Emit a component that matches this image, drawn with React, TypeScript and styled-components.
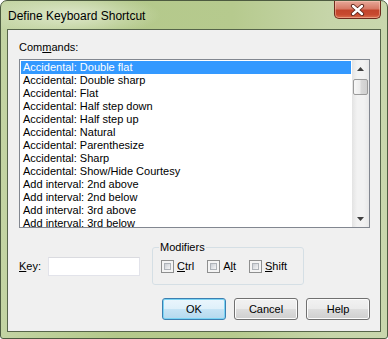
import React from 'react';
import styled, { createGlobalStyle } from 'styled-components';

const GlobalStyle = createGlobalStyle`
  html, body {
    margin: 0;
    padding: 0;
    background: #ffffff;
  }
  body {
    font-family: "Liberation Sans", Arial, sans-serif;
    font-size: 11px;
    color: #000;
  }
`;

const commands = [
  'Accidental: Double flat',
  'Accidental: Double sharp',
  'Accidental: Flat',
  'Accidental: Half step down',
  'Accidental: Half step up',
  'Accidental: Natural',
  'Accidental: Parenthesize',
  'Accidental: Sharp',
  'Accidental: Show/Hide Courtesy',
  'Add interval: 2nd above',
  'Add interval: 2nd below',
  'Add interval: 3rd above',
  'Add interval: 3rd below',
];

const Window = styled.div`
  width: 388px;
  height: 339px;
  box-sizing: border-box;
  border: 1px solid #4d5b40;
  border-radius: 7px 7px 3px 3px;
  background:
    radial-gradient(ellipse 90px 22px at 70px 14px, rgba(228, 236, 212, 0.85), rgba(228, 236, 212, 0) 100%),
    linear-gradient(to right, #c3d4a3 0%, #b4c98b 30%, #b6ca8e 60%, #c6d5a9 85%, #c9d7ad 100%);
  display: flex;
  flex-direction: column;
  padding: 0 6px 6px;
  overflow: hidden;
`;

const TitleBar = styled.div`
  height: 28px;
  display: flex;
  align-items: center;
  padding-left: 1px;
`;

const Title = styled.span`
  font-size: 12px;
  color: #000;
  padding-top: 1px;
`;

const CloseButton = styled.div`
  margin-left: auto;
  align-self: flex-start;
  width: 47px;
  height: 18px;
  box-sizing: border-box;
  border: 1px solid #6e2a1c;
  border-top: none;
  border-radius: 0 0 5px 5px;
  background: linear-gradient(to bottom, #e7a899 0%, #d77a66 45%, #c2442b 55%, #c84a2f 80%, #d9704f 100%);
  box-shadow: inset 0 0 0 1px rgba(255, 210, 190, 0.45);
  display: flex;
  align-items: center;
  justify-content: center;
`;

const Client = styled.div`
  flex: 1;
  box-sizing: border-box;
  border: 1px solid #56654a;
  background: #f0f0f0;
  display: flex;
  flex-direction: column;
  padding: 11px 10px 10px 11px;
`;

const Label = styled.label`
  display: block;
  line-height: 13px;
  height: 13px;
`;

const Accel = styled.span`
  text-decoration: underline;
  text-underline-offset: 1px;
`;

const ListBox = styled.div`
  margin-top: 5px;
  height: 169px;
  box-sizing: border-box;
  border: 1px solid #828790;
  background: #fff;
  display: flex;
  overflow: hidden;
`;

const Items = styled.div`
  flex: 1;
  padding: 1px;
  overflow: hidden;
`;

const Item = styled.div<{ $selected?: boolean }>`
  height: 13px;
  line-height: 13px;
  padding-left: 2px;
  white-space: nowrap;
  background: ${(p) => (p.$selected ? '#3399ff' : 'transparent')};
  color: ${(p) => (p.$selected ? '#ffffff' : '#000000')};
`;

const ScrollBar = styled.div`
  width: 17px;
  display: flex;
  flex-direction: column;
  background: linear-gradient(to right, #e3e3e3 0%, #f2f2f2 30%, #f2f2f2 70%, #e8e8e8 100%);
`;

const ArrowButton = styled.div`
  height: 17px;
  display: flex;
  align-items: center;
  justify-content: center;
`;

const Thumb = styled.div`
  margin: 2px 1px 0;
  height: 16px;
  box-sizing: border-box;
  border: 1px solid #9a9a9a;
  border-radius: 2px;
  background: linear-gradient(to right, #f7f7f7 0%, #ececec 45%, #d8d8d8 55%, #cfcfcf 100%);
`;

const Track = styled.div`
  flex: 1;
`;

const MiddleRow = styled.div`
  margin-top: 13px;
  display: flex;
  align-items: flex-end;
`;

const KeyField = styled.div`
  display: flex;
  align-items: center;
  margin-bottom: 9px;
`;

const TextInput = styled.div`
  margin-left: 7px;
  width: 92px;
  height: 19px;
  box-sizing: border-box;
  border: 1px solid #e2e3ea;
  border-top-color: #dadbe0;
  background: #fff;
`;

const GroupBox = styled.fieldset`
  margin: 0 0 0 12px;
  width: 152px;
  height: 44px;
  box-sizing: border-box;
  border: 1px solid #d5dfe5;
  border-radius: 3px;
  padding: 6px 8px 0;
  min-inline-size: 0;
`;

const Legend = styled.legend`
  padding: 0 1px;
  margin-left: -2px;
  line-height: 13px;
  font-size: 11px;
`;

const CheckRow = styled.div`
  display: flex;
  align-items: center;
  gap: 13px;
`;

const CheckItem = styled.div`
  display: flex;
  align-items: center;
  gap: 3px;
  line-height: 13px;
`;

const CheckBox = styled.div`
  width: 13px;
  height: 13px;
  box-sizing: border-box;
  border: 1px solid #8e8f8f;
  background: #f4f4f4;
  padding: 2px;
  &::after {
    content: '';
    display: block;
    width: 100%;
    height: 100%;
    box-sizing: border-box;
    border: 1px solid #aeb3b9;
    background: linear-gradient(135deg, #cbcfd5 0%, #e4e6e9 60%, #f6f6f6 100%);
  }
`;

const ButtonRow = styled.div`
  margin-top: 13px;
  display: flex;
  justify-content: flex-end;
  gap: 8px;
`;

const Button = styled.div<{ $default?: boolean }>`
  width: 64px;
  height: 22px;
  box-sizing: border-box;
  border: 1px solid ${(p) => (p.$default ? '#3c7fb1' : '#707070')};
  border-radius: 3px;
  display: flex;
  align-items: center;
  justify-content: center;
  font-size: 11px;
  background: ${(p) =>
    p.$default
      ? 'linear-gradient(to bottom, #eaf6fd 0%, #dff0fa 48%, #c6e4f5 52%, #b5d9ee 100%)'
      : 'linear-gradient(to bottom, #f2f2f2 0%, #ebebeb 48%, #dddddd 52%, #cfcfcf 100%)'};
  box-shadow: ${(p) =>
    p.$default ? 'inset 0 0 0 1px #7ad4f4' : 'inset 0 0 0 1px #fcfcfc'};
`;

function ArrowIcon({ down }: { down?: boolean }) {
  return (
    <svg width="7" height="4" viewBox="0 0 7 4">
      <path d={down ? 'M0 0 H7 L3.5 4 Z' : 'M0 4 H7 L3.5 0 Z'} fill="#3f3f3f" />
    </svg>
  );
}

function CloseGlyph() {
  return (
    <svg width="15" height="12" viewBox="0 0 15 12">
      <path d="M3 2 L12 10 M12 2 L3 10" stroke="#5a2418" strokeWidth="4.2" strokeLinecap="round" />
      <path d="M3 2 L12 10 M12 2 L3 10" stroke="#ffffff" strokeWidth="2.4" strokeLinecap="round" />
    </svg>
  );
}

export default function App() {
  return (
    <>
      <GlobalStyle />
      <Window>
        <TitleBar>
          <Title>Define Keyboard Shortcut</Title>
          <CloseButton>
            <CloseGlyph />
          </CloseButton>
        </TitleBar>
        <Client>
          <Label>
            Com<Accel>m</Accel>ands:
          </Label>
          <ListBox>
            <Items>
              {commands.map((c, i) => (
                <Item key={c} $selected={i === 0}>
                  {c}
                </Item>
              ))}
            </Items>
            <ScrollBar>
              <ArrowButton>
                <ArrowIcon />
              </ArrowButton>
              <Thumb />
              <Track />
              <ArrowButton>
                <ArrowIcon down />
              </ArrowButton>
            </ScrollBar>
          </ListBox>
          <MiddleRow>
            <KeyField>
              <Label>
                <Accel>K</Accel>ey:
              </Label>
              <TextInput />
            </KeyField>
            <GroupBox>
              <Legend>Modifiers</Legend>
              <CheckRow>
                <CheckItem>
                  <CheckBox />
                  <span>
                    <Accel>C</Accel>trl
                  </span>
                </CheckItem>
                <CheckItem>
                  <CheckBox />
                  <span>
                    A<Accel>l</Accel>t
                  </span>
                </CheckItem>
                <CheckItem>
                  <CheckBox />
                  <span>
                    <Accel>S</Accel>hift
                  </span>
                </CheckItem>
              </CheckRow>
            </GroupBox>
          </MiddleRow>
          <ButtonRow>
            <Button $default>OK</Button>
            <Button>Cancel</Button>
            <Button>Help</Button>
          </ButtonRow>
        </Client>
      </Window>
    </>
  );
}
